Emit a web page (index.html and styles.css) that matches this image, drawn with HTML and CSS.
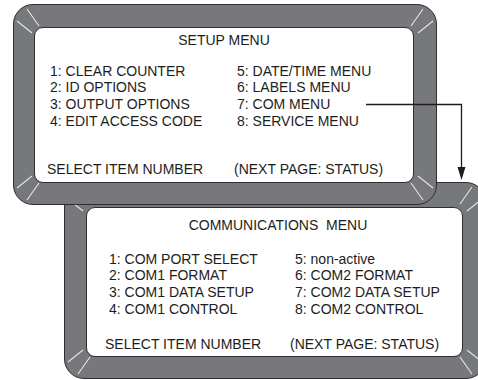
FILE: index.html
```html
<!DOCTYPE html>
<html>
<head>
    <title>Setup and Communications Menus</title>
    <link rel="stylesheet" href="styles.css">
</head>

<body>
    <div class="diagram">

        <!-- Setup menu display -->
        <div class="panel panel-setup">
            <svg class="glints" width="424" height="201" viewBox="0 0 424 201">
                <path d="M4 17L19 29M14 5L26 22M420 17L405 29M410 5L398 22M4 184L19 172M14 196L26 179M420 184L405 172M410 196L398 179"/>
            </svg>
            <div class="screen">
                <div class="screen-title">SETUP MENU</div>
                <div class="menu">
                    <div class="menu-col">
                        <div>1: CLEAR COUNTER</div>
                        <div>2: ID OPTIONS</div>
                        <div>3: OUTPUT OPTIONS</div>
                        <div>4: EDIT ACCESS CODE</div>
                    </div>
                    <div class="menu-col">
                        <div>5: DATE/TIME MENU</div>
                        <div>6: LABELS MENU</div>
                        <div>7: COM MENU</div>
                        <div>8: SERVICE MENU</div>
                    </div>
                </div>
                <div class="screen-footer">
                    <span>SELECT ITEM NUMBER</span>
                    <span>(NEXT PAGE: STATUS)</span>
                </div>
            </div>
        </div>

        <!-- Communications menu display -->
        <div class="panel panel-comm">
            <svg class="glints" width="422" height="197" viewBox="0 0 422 197">
                <path d="M4 17L19 29M14 5L26 22M418 17L403 29M408 5L396 22M4 180L19 168M14 192L26 175M418 180L403 168M408 192L396 175"/>
            </svg>
            <div class="screen">
                <div class="screen-title">COMMUNICATIONS&nbsp; MENU</div>
                <div class="menu">
                    <div class="menu-col">
                        <div>1: COM PORT SELECT</div>
                        <div>2: COM1 FORMAT</div>
                        <div>3: COM1 DATA SETUP</div>
                        <div>4: COM1 CONTROL</div>
                    </div>
                    <div class="menu-col">
                        <div>5: non-active</div>
                        <div>6: COM2 FORMAT</div>
                        <div>7: COM2 DATA SETUP</div>
                        <div>8: COM2 CONTROL</div>
                    </div>
                </div>
                <div class="screen-footer">
                    <span>SELECT ITEM NUMBER</span>
                    <span>(NEXT PAGE: STATUS)</span>
                </div>
            </div>
        </div>

        <!-- arrow from "7: COM MENU" down to the next display -->
        <svg class="arrow" width="478" height="380" viewBox="0 0 478 380">
            <path class="arrow-line" d="M366 104.5H461.5V170"/>
            <path class="arrow-head" d="M457.5 167L465.5 167L461.5 180Z"/>
        </svg>
    </div>
</body>
</html>
```

FILE: styles.css
```css
body {
    margin: 0;
    padding: 0;
    background-color: #fff;
    font-family: "Liberation Sans", Arial, sans-serif;
    color: #1d1d1b;
}

.diagram {
    position: relative;
    width: 478px;
    height: 380px;
    overflow: hidden;
}

/* grey bezel round each display */
.panel {
    position: absolute;
    box-sizing: border-box;
    background-color: #77787b;
    border: 1px solid #2e2e2e;
    border-radius: 20px;
    display: flex;
}

.panel-setup {
    left: 13px;
    top: 4px;
    width: 424px;
    height: 201px;
    padding: 22px 22px 21px 20px;
    z-index: 2;
}

.panel-comm {
    left: 64px;
    top: 182px;
    width: 422px;
    height: 197px;
    padding: 24px 22px 21px 21px;
    z-index: 1;
}

.glints {
    position: absolute;
    left: -1px;
    top: -1px;
}

.glints path {
    stroke: #e6e6e6;
    stroke-width: 1.1;
    fill: none;
}

.screen {
    flex: 1;
    display: flex;
    flex-direction: column;
    background-color: #fff;
    border: 1px solid #2e2e2e;
    border-radius: 9px;
    font-size: 14px;
    line-height: 16.7px;
}

.screen-title {
    text-align: center;
}

.menu {
    display: grid;
}

.screen-footer {
    margin-top: auto;
    display: grid;
}

.panel-setup .screen {
    padding: 4px 0 4px 0;
}

.panel-setup .menu {
    grid-template-columns: 187px 1fr;
    margin-top: 14px;
    padding-left: 15px;
}

.panel-setup .screen-footer {
    grid-template-columns: 187px 1fr;
    padding-left: 12px;
}

.panel-comm .screen {
    padding: 9px 0 3px 0;
}

.panel-comm .screen-title {
    padding-left: 7px;
}

.panel-comm .menu {
    grid-template-columns: 186px 1fr;
    margin-top: 17px;
    padding-left: 22px;
}

.panel-comm .screen-footer {
    grid-template-columns: 185px 1fr;
    padding-left: 18px;
}

.arrow {
    position: absolute;
    left: 0;
    top: 0;
    z-index: 3;
    pointer-events: none;
}

.arrow-line {
    stroke: #1d1d1b;
    stroke-width: 1.3;
    fill: none;
}

.arrow-head {
    fill: #1d1d1b;
}
```
